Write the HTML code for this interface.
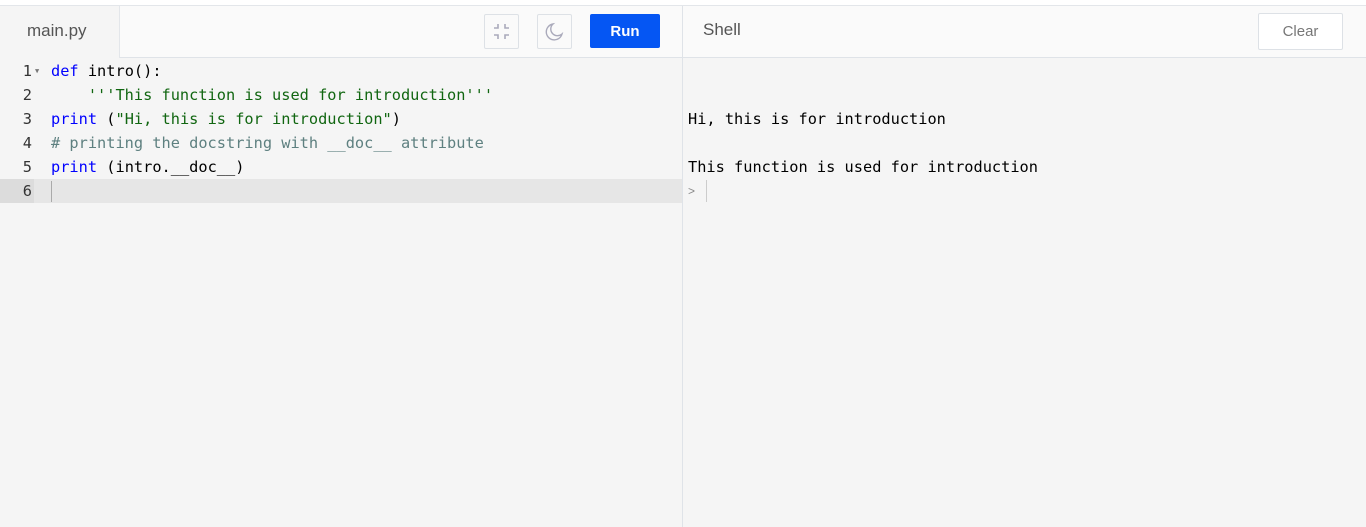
<!DOCTYPE html>
<html><head><style>
body{margin:0;width:1366px;height:527px;background:#f5f5f5;position:relative;overflow:hidden;font-family:"Liberation Sans",sans-serif}
.top{position:absolute;left:0;top:0;width:1366px;height:5px;background:#fff;border-bottom:1px solid #e3e6ea}
.hdr{position:absolute;top:6px;height:51px;background:#fafafa;border-bottom:1px solid #dfe3e8}
.tab{position:absolute;left:0;top:6px;width:119px;height:52px;background:#f5f5f5;border-right:1px solid #e3e6ea;color:#555;font-size:17px;line-height:50px;text-indent:27px}
.btn{position:absolute;box-sizing:border-box;border:1px solid #dde1e6;border-radius:2px;background:#fafafa}
.run{position:absolute;left:590px;top:14px;width:70px;height:34px;background:#0556f3;color:#fff;font-weight:bold;font-size:15px;text-align:center;line-height:35px;border-radius:2px}
.div{position:absolute;left:682px;top:6px;width:1px;height:521px;background:#dfe3e8}
.code{position:absolute;left:0;top:59px;font-family:"DejaVu Sans Mono",monospace;font-size:15.3px;line-height:24px}
.ln{position:absolute;left:0;width:32px;text-align:right;color:#333}
.l{position:absolute;left:51px;white-space:pre;color:#000}
.k{color:#0000ff}.s{color:#116611}.c{color:#5e8080}
.sh{position:absolute;left:688px;font-family:"DejaVu Sans Mono",monospace;font-size:15.3px;white-space:pre;color:#000}
</style></head><body>
<div class="top"></div>
<div class="hdr" style="left:0;width:682px"></div>
<div class="hdr" style="left:683px;width:683px"></div>
<div class="tab">main.py</div>
<div class="btn" style="left:484px;top:14px;width:35px;height:35px"><svg width="33" height="33" viewBox="0 0 33 33" fill="none" stroke="#aab" stroke-width="1.6"><path d="M13 9v4H9M20 9v4h4M13 24v-4H9M20 24v-4h4"/></svg></div>
<div class="btn" style="left:537px;top:14px;width:35px;height:35px"><svg width="33" height="33" viewBox="0 0 33 33" fill="none" stroke="#aab" stroke-width="1.4"><path d="M15 9a8 8 0 1 0 9 10a6.5 6.5 0 0 1-9-10z"/></svg></div>
<div class="run">Run</div>
<div style="position:absolute;left:703px;top:20px;font-size:17px;color:#555">Shell</div>
<div class="btn" style="left:1258px;top:13px;width:85px;height:37px;color:#777;font-size:15px;text-align:center;line-height:35px;background:#fff">Clear</div>
<div class="div"></div>
<div style="position:absolute;left:0;top:179px;width:682px;height:24px;background:#e6e6e6"></div>
<div style="position:absolute;left:0;top:179px;width:34px;height:24px;background:#dcdcdc"></div>
<div style="position:absolute;left:51px;top:181px;width:1px;height:21px;background:#aaa"></div>
<div class="code">
<div class="ln" style="top:0">1</div><div style="position:absolute;left:35px;top:0;font-size:7px;color:#777">▼</div><div class="l" style="top:0"><span class="k">def</span> intro():</div>
<div class="ln" style="top:24px">2</div><div class="l s" style="top:24px">    '''This function is used for introduction'''</div>
<div class="ln" style="top:48px">3</div><div class="l" style="top:48px"><span class="k">print</span> (<span class="s">"Hi, this is for introduction"</span>)</div>
<div class="ln" style="top:72px">4</div><div class="l c" style="top:72px"># printing the docstring with __doc__ attribute</div>
<div class="ln" style="top:96px">5</div><div class="l" style="top:96px"><span class="k">print</span> (intro.__doc__)</div>
<div class="ln" style="top:120px">6</div>
</div>
<div class="sh" style="top:110px">Hi, this is for introduction</div>
<div class="sh" style="top:158px">This function is used for introduction</div>
<div style="position:absolute;left:688px;top:184px;font-size:12px;color:#888">&gt;</div>
<div style="position:absolute;left:706px;top:180px;width:1px;height:22px;background:#ccc"></div>
</body></html>
